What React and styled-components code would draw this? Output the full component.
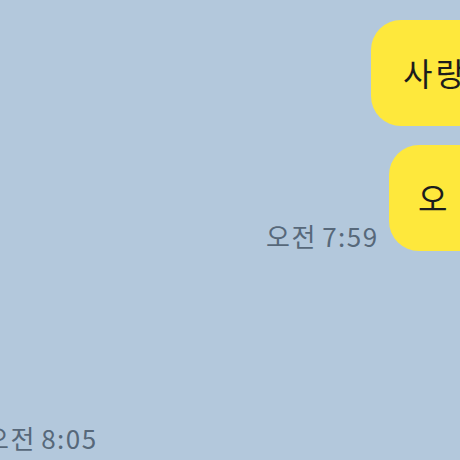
import React from 'react';
import styled, { createGlobalStyle } from 'styled-components';

const GlobalStyle = createGlobalStyle`
  html, body {
    margin: 0;
    padding: 0;
    background: #b3c8dc;
  }
  body {
    font-family: 'Noto Sans CJK KR', 'Noto Sans', sans-serif;
  }
`;

const Screen = styled.div`
  width: 460px;
  height: 460px;
  overflow: hidden;
  background: #b3c8dc;
  display: flex;
  flex-direction: column;
  padding-top: 20px;
  box-sizing: border-box;
`;

const Row = styled.div`
  display: flex;
  align-items: flex-end;
  gap: ${({ gap }) => gap || 0}px;
  margin-left: ${({ indent }) => indent}px;
  margin-top: ${({ top }) => top || 0}px;
  white-space: nowrap;
`;

const Bubble = styled.div`
  flex-shrink: 0;
  background: #fee83c;
  color: #1c1c1c;
  font-size: 32px;
  line-height: 42px;
  letter-spacing: 3px;
  padding: 31px 40px 33px ${({ left }) => left || 32}px;
  border-radius: 30px;
  min-width: 160px;
`;

const Time = styled.div`
  flex-shrink: 0;
  width: ${({ w }) => w || 'auto'};
  text-align: right;
  color: #57687a;
  font-size: 26px;
  line-height: 30px;
  letter-spacing: 1.5px;
  word-spacing: -2px;
`;

const App = () => (
  <>
    <GlobalStyle />
    <Screen>
      <Row indent={371}>
        <Bubble>사랑해</Bubble>
      </Row>
      <Row indent={266} gap={11} top={19}>
        <Time w="112px">오전 7:59</Time>
        <Bubble left={29}>오</Bubble>
      </Row>
      <Row indent={-15} top={172}>
        <Time>오전 8:05</Time>
      </Row>
    </Screen>
  </>
);

export default App;
